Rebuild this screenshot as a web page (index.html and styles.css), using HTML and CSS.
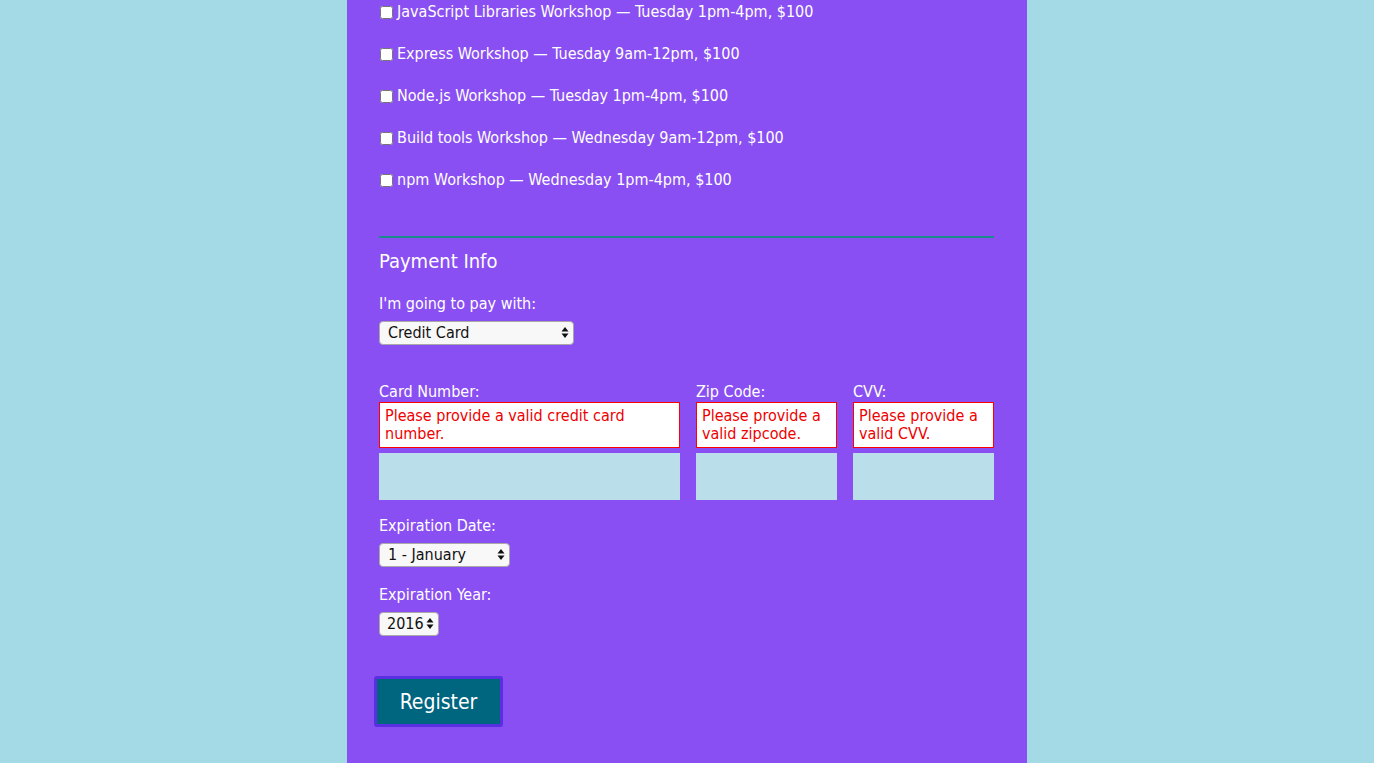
FILE: index.html
```html
<!DOCTYPE html>
<html lang="en">
<head>
<meta charset="utf-8">
<title>Register</title>
<link rel="stylesheet" href="styles.css">
</head>
<body>
<form class="container">
  <fieldset class="activities">
    <label class="activity"><input type="checkbox" name="js-libs"> JavaScript Libraries Workshop — Tuesday 1pm-4pm, $100</label>
    <label class="activity"><input type="checkbox" name="express"> Express Workshop — Tuesday 9am-12pm, $100</label>
    <label class="activity"><input type="checkbox" name="node"> Node.js Workshop — Tuesday 1pm-4pm, $100</label>
    <label class="activity"><input type="checkbox" name="build-tools"> Build tools Workshop — Wednesday 9am-12pm, $100</label>
    <label class="activity"><input type="checkbox" name="npm"> npm Workshop — Wednesday 1pm-4pm, $100</label>
  </fieldset>

  <fieldset class="payment">
    <legend class="legend">Payment Info</legend>
    <label class="label" for="payment">I'm going to pay with:</label>
    <span class="select-wrap select-pay">
      <select id="payment" class="select">
        <option>Credit Card</option>
        <option>PayPal</option>
        <option>Bitcoin</option>
      </select>
      <svg class="arrows" width="8" height="13" viewBox="0 0 8 13"><path d="M4 1 L7.5 5.5 H0.5 Z M4 12 L7.5 7.5 H0.5 Z" fill="#111"/></svg>
    </span>

    <div class="card-grid">
      <div class="field">
        <label class="label" for="cc-num">Card Number:</label>
        <div class="error">Please provide a valid credit card number.</div>
        <input id="cc-num" class="input" type="text">
      </div>
      <div class="field">
        <label class="label" for="zip">Zip Code:</label>
        <div class="error">Please provide a valid zipcode.</div>
        <input id="zip" class="input" type="text">
      </div>
      <div class="field">
        <label class="label" for="cvv">CVV:</label>
        <div class="error">Please provide a valid CVV.</div>
        <input id="cvv" class="input" type="text">
      </div>
    </div>

    <label class="label" for="exp-month">Expiration Date:</label>
    <span class="select-wrap select-month">
      <select id="exp-month" class="select">
        <option>1 - January</option>
        <option>2 - February</option>
      </select>
      <svg class="arrows" width="8" height="13" viewBox="0 0 8 13"><path d="M4 1 L7.5 5.5 H0.5 Z M4 12 L7.5 7.5 H0.5 Z" fill="#111"/></svg>
    </span>

    <label class="label" for="exp-year">Expiration Year:</label>
    <span class="select-wrap select-year">
      <select id="exp-year" class="select">
        <option>2016</option>
        <option>2017</option>
      </select>
      <svg class="arrows" width="8" height="13" viewBox="0 0 8 13"><path d="M4 1 L7.5 5.5 H0.5 Z M4 12 L7.5 7.5 H0.5 Z" fill="#111"/></svg>
    </span>
  </fieldset>

  <button type="submit" class="register">Register</button>
</form>
</body>
</html>
```

FILE: styles.css
```css
* {
  box-sizing: border-box;
}

html, body {
  height: 100%;
}

body {
  margin: 0;
  background: #a4d9e6;
  font-family: "DejaVu Sans Condensed", "DejaVu Sans", sans-serif;
  font-size: 16px;
  color: #fff;
}

.container {
  width: 680px;
  min-height: 100%;
  margin: 0 auto;
  padding: 2px 32px 24px;
  background: #8a4ff2;
}

fieldset {
  border: 0;
  margin: 0;
  padding: 0;
  min-width: 0;
}

.activities {
  display: flex;
  flex-direction: column;
  gap: 22px;
  padding-bottom: 46px;
  border-bottom: 2px solid #1a8a8c;
  width: 615px;
}

.activity {
  display: flex;
  align-items: center;
  height: 20px;
  line-height: 20px;
  gap: 4px;
}

.activity input {
  margin: 0 0 0 1px;
  width: 13px;
  height: 13px;
}

.payment {
  display: flex;
  flex-direction: column;
  align-items: flex-start;
  padding-top: 10px;
}

.legend {
  float: left;
  width: 100%;
  padding: 0;
  font-size: 20px;
  line-height: 26px;
  margin-bottom: 20px;
}

.label {
  display: block;
  line-height: 20px;
  margin-bottom: 7px;
}

.select-wrap {
  position: relative;
  display: inline-block;
  height: 24px;
}

.select {
  -webkit-appearance: none;
  appearance: none;
  height: 24px;
  width: 100%;
  margin: 0;
  padding: 0 18px 0 8px;
  border: 1px solid #a8a8a8;
  border-radius: 4px;
  background: #f8f8f8;
  font-family: inherit;
  font-size: 16px;
  color: #111;
  line-height: 22px;
}

.arrows {
  position: absolute;
  right: 5px;
  top: 5px;
  pointer-events: none;
}

.select-pay {
  width: 195px;
  margin-bottom: 37px;
}

.select-month {
  width: 131px;
  margin-bottom: 18px;
}

.select-year {
  width: 60px;
}

.select-year .select {
  padding: 0 0 0 7px;
}

.card-grid {
  display: grid;
  grid-template-columns: 301px 141px 141px;
  column-gap: 16px;
  margin-bottom: 16px;
}

.field {
  display: flex;
  flex-direction: column;
  min-width: 0;
}

.field .label {
  margin-bottom: 0;
}

.error {
  border: 1px solid #ff0000;
  background: #fff;
  color: #ee0000;
  padding: 4px 5px 4px 5px;
  line-height: 18px;
  height: 46px;
  margin-bottom: 5px;
}

.input {
  display: block;
  width: 100%;
  height: 47px;
  border: 0;
  margin: 0;
  background: #bbdfea;
}

.register {
  display: block;
  margin: 40px 0 0 -5px;
  width: 129px;
  height: 51px;
  border: 3px solid #5a2fe2;
  border-radius: 3px;
  background: #00657f;
  color: #fff;
  font-family: inherit;
  font-size: 21px;
  font-weight: 500;
}
```
